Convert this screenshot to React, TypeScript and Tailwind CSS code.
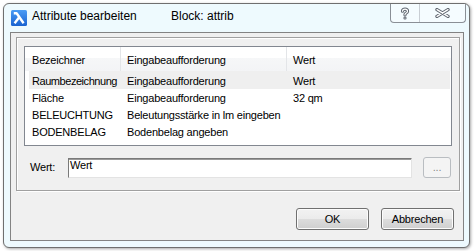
export default function App() {
  const row = (a: string, b: string, c: string) => (
    <div className="flex h-[17px] ml-[4px] mr-[1px] leading-[17px] whitespace-nowrap">
      <div className="w-[92px] pl-[3px] overflow-hidden">{a}</div>
      <div className="w-[166px] pl-[6px] overflow-hidden">{b}</div>
      <div className="flex-1 pl-[6px]">{c}</div>
    </div>
  );
  return (
    <div className="w-[476px] h-[251px] bg-white pt-[3px] pl-[3px] font-['Liberation_Sans',Arial,sans-serif] text-[11px] tracking-[-0.2px] text-black">
      <div className="w-[467px] h-[245px] border border-[#6f6f6f] rounded-[6px] bg-[#eefafe] flex flex-col shadow-[1px_1px_3px_rgba(0,0,0,0.35)]">
        {/* title bar */}
        <div className="h-[28px] flex items-start shrink-0 tracking-normal">
          <svg className="ml-[7px] mt-[6px]" width="16" height="16" viewBox="0 0 16 16">
            <defs>
              <linearGradient id="bg" x1="0" y1="0" x2="0" y2="1">
                <stop offset="0" stopColor="#4a9cf5" />
                <stop offset="1" stopColor="#1a62d0" />
              </linearGradient>
            </defs>
            <rect x="0" y="0" width="16" height="16" rx="1.5" fill="url(#bg)" />
            <path d="M2.8 3.2 H5.6 L12.6 13.2" stroke="#fff" strokeWidth="2.4" fill="none" strokeLinejoin="round" />
            <path d="M8 7.6 L3.6 13.2" stroke="#fff" strokeWidth="2.4" fill="none" />
          </svg>
          <span className="ml-[5px] mt-[4px] w-[139px] text-[12px] leading-[17px] whitespace-nowrap">Attribute bearbeiten</span>
          <span className="mt-[4px] text-[12px] leading-[17px] whitespace-nowrap">Block: attrib</span>
          <div className="ml-auto mr-[3px] h-[19px] flex border-x border-b border-[#8a8f96] rounded-b-[4px] bg-[#f5fcff]">
            <div className="w-[28px] flex items-center justify-center">
              <svg width="10" height="13" viewBox="0 0 10 13">
                <path d="M2.5 4.2 C2.5 1.3 7.5 1.3 7.5 4.2 C7.5 6 5 6 5 7.6 V8" stroke="#5f6670" strokeWidth="3.2" fill="none" strokeLinecap="round" />
                <circle cx="5" cy="11" r="1.6" fill="#5f6670" />
                <path d="M2.5 4.2 C2.5 1.3 7.5 1.3 7.5 4.2 C7.5 6 5 6 5 7.6 V8" stroke="#fff" strokeWidth="1.2" fill="none" strokeLinecap="round" />
                <circle cx="5" cy="11" r="0.6" fill="#fff" />
              </svg>
            </div>
            <div className="w-[46px] border-l border-[#c9ced4] flex items-center justify-center">
              <svg width="15" height="10" viewBox="0 0 15 10">
                <path d="M2 1.6 L13 8.4 M2 8.4 L13 1.6" stroke="#5f6670" strokeWidth="3.4" strokeLinecap="round" />
                <path d="M2 1.6 L13 8.4 M2 8.4 L13 1.6" stroke="#fff" strokeWidth="1.3" strokeLinecap="round" />
              </svg>
            </div>
          </div>
        </div>
        {/* client area */}
        <div className="ml-[6px] w-[454px] h-[209px] border border-[#838383] bg-[#f0f0f0] flex flex-col">
          <div className="ml-[5px] mt-[4px] w-[444px] h-[154px] border border-[#a0a0a0] shadow-[inset_1px_1px_0_#fff,1px_1px_0_#fff] pl-[7px] pt-[8px]">
            <div className="w-[428px] h-[100px] border border-[#828790] bg-white">
              <div className="h-[24px] flex bg-[linear-gradient(#ffffff,#ffffff_45%,#f6f7f8_45%,#f3f4f6)] leading-[17px] whitespace-nowrap">
                <div className="w-[96px] pl-[7px] pt-[5px] border-r border-[#e3e5e8]">Bezeichner</div>
                <div className="w-[166px] pl-[6px] pt-[5px] border-r border-[#e3e5e8]">Eingabeaufforderung</div>
                <div className="flex-1 pl-[6px] pt-[5px]">Wert</div>
              </div>
              <div className="h-[18px] pt-[2px] bg-[#efefef] ml-[4px] mr-[1px]">
                <div className="flex h-[17px] leading-[17px] whitespace-nowrap">
                  <div className="w-[92px] pl-[3px] overflow-hidden tracking-[-0.45px]">Raumbezeichnung</div>
                  <div className="w-[166px] pl-[6px]">Eingabeaufforderung</div>
                  <div className="flex-1 pl-[6px]">Wert</div>
                </div>
              </div>
              <div className="pt-[1px]">
                {row("Fläche", "Eingabeaufforderung", "32 qm")}
                {row("BELEUCHTUNG", "Beleutungsstärke in lm eingeben", "")}
                {row("BODENBELAG", "Bodenbelag angeben", "")}
              </div>
            </div>
            <div className="mt-[12px] flex items-start">
              <div className="ml-[6px] w-[38px] pt-[1px] leading-[17px]">Wert:</div>
              <div className="w-[344px] h-[20px] border border-t-[#7a7a7a] border-l-[#7a7a7a] border-r-[#e3e3e3] border-b-[#e3e3e3] shadow-[inset_0_1px_0_#9a9a9a] bg-white pl-[1px] leading-[13px]">
                Wert
              </div>
              <div className="ml-[11px] -mt-[1px] w-[28px] h-[21px] border border-[#b9bdc1] rounded-[3px] bg-[#f4f4f4] flex items-center justify-center text-[#8a8a8a] leading-[13px]">
                ...
              </div>
            </div>
          </div>
          <div className="mt-auto mb-[10px] pr-[9px] flex justify-end gap-[12px]">
            <div className="w-[73px] h-[22px] border border-[#707070] rounded-[3px] bg-[linear-gradient(#f2f2f2,#ebebeb_50%,#dddddd_50%,#cfcfcf)] shadow-[inset_0_0_0_1px_#fcfcfc] flex items-center justify-center">
              OK
            </div>
            <div className="w-[73px] h-[22px] border border-[#707070] rounded-[3px] bg-[linear-gradient(#f2f2f2,#ebebeb_50%,#dddddd_50%,#cfcfcf)] shadow-[inset_0_0_0_1px_#fcfcfc] flex items-center justify-center">
              Abbrechen
            </div>
          </div>
        </div>
      </div>
    </div>
  );
}
